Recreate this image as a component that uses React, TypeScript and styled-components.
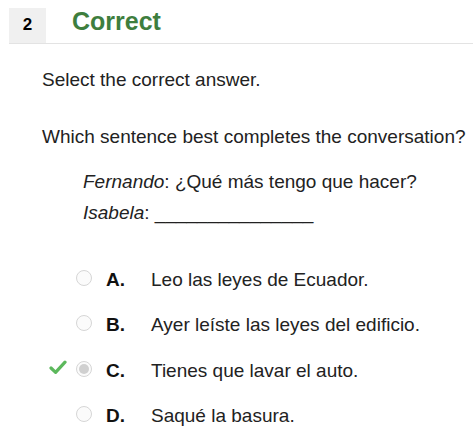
import React from "react";
import styled, { createGlobalStyle } from "styled-components";

const GlobalStyle = createGlobalStyle`
  body {
    margin: 0;
    background: #fff;
    font-family: "Liberation Sans", Arial, sans-serif;
    color: #222;
  }
`;

const Page = styled.div`
  width: 473px;
  height: 441px;
  overflow: hidden;
  padding-top: 8px;
  box-sizing: border-box;
`;

const Header = styled.div`
  display: flex;
  align-items: flex-start;
  margin-left: 9px;
  height: 35px;
  border-bottom: 1px solid #e3e3e3;
`;

const Number = styled.div`
  width: 37px;
  height: 35px;
  display: flex;
  align-items: center;
  justify-content: center;
  padding-bottom: 2px;
  box-sizing: border-box;
  background: #f0f0f0;
  font-weight: bold;
  font-size: 17px;
  color: #000;
`;

const Status = styled.div`
  margin: -1px 0 0 26px;
  font-size: 25px;
  line-height: 29px;
  font-weight: bold;
  color: #3e7e3e;
`;

const Body = styled.div`
  padding-left: 42px;
  font-size: 19px;
  line-height: 22px;
`;

const Prompt = styled.p`
  margin: 25px 0 0;
`;

const Question = styled.p`
  margin: 35px 0 0;
`;

const Dialogue = styled.div`
  margin: 23px 0 0 41px;
  display: flex;
  flex-direction: column;
  gap: 9px;
`;

const Options = styled.div`
  margin-top: 45px;
  display: flex;
  flex-direction: column;
  gap: 23.3px;
`;

const Option = styled.div`
  display: flex;
  align-items: flex-start;
  height: 22px;
  position: relative;
`;

const Check = styled.svg`
  position: absolute;
  left: 7px;
  top: 0;
`;

const Radio = styled.span<{ $selected?: boolean }>`
  margin: 1px 0 0 34px;
  width: 16px;
  height: 16px;
  border-radius: 50%;
  border: 1px solid #d6d6d6;
  background: #fbfbfb;
  box-sizing: border-box;
  display: flex;
  align-items: center;
  justify-content: center;
  &::after {
    content: "";
    width: 10px;
    height: 10px;
    border-radius: 50%;
    background: ${(p) => (p.$selected ? "#d0d0d0" : "transparent")};
  }
`;

const Letter = styled.span`
  margin-left: 14px;
  width: 45px;
  font-weight: bold;
  color: #111;
`;

const options = [
  { letter: "A.", text: "Leo las leyes de Ecuador." },
  { letter: "B.", text: "Ayer leíste las leyes del edificio." },
  { letter: "C.", text: "Tienes que lavar el auto.", correct: true },
  { letter: "D.", text: "Saqué la basura." },
];

export default function App() {
  return (
    <Page>
      <GlobalStyle />
      <Header>
        <Number>2</Number>
        <Status>Correct</Status>
      </Header>
      <Body>
        <Prompt>Select the correct answer.</Prompt>
        <Question>Which sentence best completes the conversation?</Question>
        <Dialogue>
          <div>
            <em>Fernando</em>: ¿Qué más tengo que hacer?
          </div>
          <div>
            <em>Isabela</em>: _______________
          </div>
        </Dialogue>
        <Options>
          {options.map((o) => (
            <Option key={o.letter}>
              {o.correct && (
                <Check width="18" height="15" viewBox="0 0 18 15">
                  <path
                    d="M2 8 L6.6 12.4 L16 2.2"
                    fill="none"
                    stroke="#5cb85c"
                    strokeWidth="3.2"
                    strokeLinecap="round"
                    strokeLinejoin="round"
                  />
                </Check>
              )}
              <Radio $selected={o.correct} />
              <Letter>{o.letter}</Letter>
              <span>{o.text}</span>
            </Option>
          ))}
        </Options>
      </Body>
    </Page>
  );
}
